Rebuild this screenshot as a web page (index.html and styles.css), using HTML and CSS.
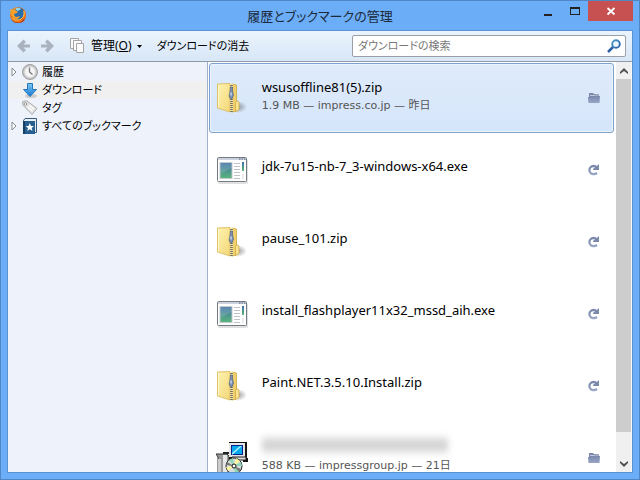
FILE: index.html
```html
<!DOCTYPE html>
<html lang="ja">
<head>
<meta charset="utf-8">
<title>履歴とブックマークの管理</title>
<link rel="stylesheet" href="styles.css">
</head>
<body>
<svg class="defs" aria-hidden="true">
  <defs>
    <linearGradient id="g-folder" x1="0" y1="0" x2="1" y2="1"><stop offset="0" stop-color="#fff3b0"/><stop offset="1" stop-color="#f3d778"/></linearGradient>
    <linearGradient id="g-app" x1="0" y1="0" x2="0" y2="1"><stop offset="0" stop-color="#3d6fa8"/><stop offset="1" stop-color="#5cb67a"/></linearGradient>
    <linearGradient id="g-action" x1="0" y1="0" x2="0" y2="1"><stop offset="0" stop-color="#7a88ad"/><stop offset="1" stop-color="#98a5c5"/></linearGradient>
    <linearGradient id="g-down" x1="0" y1="0" x2="0" y2="1"><stop offset="0" stop-color="#7cc8f2"/><stop offset="1" stop-color="#1a78d4"/></linearGradient>
    <linearGradient id="g-lens" x1="0" y1="0" x2="1" y2="1"><stop offset="0" stop-color="#4f9fd0"/><stop offset="1" stop-color="#2558a0"/></linearGradient>
    <radialGradient id="g-shadow"><stop offset="0" stop-color="#555" stop-opacity=".55"/><stop offset="1" stop-color="#555" stop-opacity="0"/></radialGradient>
    <linearGradient id="g-fox" x1="0" y1="0" x2="1" y2="1"><stop offset="0" stop-color="#f49a20"/><stop offset="1" stop-color="#c8380c"/></linearGradient>
  </defs>
  <symbol id="zip" viewBox="0 0 32 32">
    <ellipse cx="22" cy="25" rx="9" ry="6" fill="url(#g-shadow)"/>
    <path d="M16 2l4.500 1v26l-4.500 1z" fill="#f0d06c" stroke="#d0a93f" stroke-width=".8"/>
    <path d="M19.500 20.500q0-1.500 1.500-1.500 2 0 2 2v6.500l-3.500 2z" fill="#fbe594" stroke="#d0a93f" stroke-width=".8"/>
    <path d="M1.500 2l12.500-.5L14 30 1.500 26z" fill="url(#g-folder)" stroke="#dcbb5c" stroke-width=".9"/>
    <path d="M2.600 3v22" stroke="#fff9d2"/>
    <path d="M14 1.500l3 .5v28l-3 .5z" fill="#f6e3a0"/>
    <path d="M15.500 3v27" stroke="#6f6c5e" stroke-width="2.600" stroke-dasharray="1 1"/>
    <path d="M14.500 5h2v4l1 4-1.500 4h-1.500l-1.500-3 1-4z" fill="#7d92b4" stroke="#53637f" stroke-width=".7"/>
    <path d="M15 10.500v3" stroke="#f3f7fc"/>
  </symbol>
  <symbol id="app" viewBox="0 0 32 32">
    <rect x="2" y="5" width="30" height="25" rx="2" fill="#999" opacity=".3"/>
    <rect x="1.500" y="3.500" width="29" height="24" rx="1" fill="#fff" stroke="#747b84"/>
    <path d="M2 4h28v2H2z" fill="#ccd2dc"/>
    <path d="M23 5h1.500m1 0H27m1 0h1.500" stroke="#536174"/>
    <rect x="4" y="8.500" width="12" height="16" fill="url(#g-app)" stroke="#c3c9cd"/>
    <path d="M4.500 9h11v5l-11 6z" fill="#fff" opacity=".15"/>
    <path d="M18 9.500h6m-6 3h6m-6 3h6m-6 3h6m-6 3h6m-6 3h6" stroke="#c0c2c6"/>
    <path d="M26 8h2v9h-2z" fill="url(#g-app)"/>
    <path d="M26 20h2v5h-2z" fill="#ececec"/>
  </symbol>
  <symbol id="installer" viewBox="0 0 32 32">
    <path d="M0 12l2 3v17h11V14l-2-2z" fill="#999" stroke="#333"/>
    <path d="M7 13h4v19H7z" fill="#e7e7e7"/>
    <path d="M2 17h3v15H2z" fill="#ccc"/>
    <path d="M7 10h6v2H7z" fill="#222"/>
    <path d="M13 0h18v16h1v4h-5v-3H13z" fill="#151515"/>
    <path d="M13 1h16v14H13z" fill="#e5e5e5"/>
    <path d="M15 3h12v10H15z" fill="#08218d"/>
    <path d="M16 4h10v8H16z" fill="#08a8ec"/>
    <path d="M16 11l8-7h2l-10 9z" fill="#a6f5ff"/>
    <path d="M16 15h14v3H16z" fill="#ddd" stroke="#222"/>
    <circle cx="18" cy="24" r="8" fill="#d8dcdb" stroke="#222"/>
    <path d="M18 24l-5-6 4-2zm0 0l7-4 1 4zm0 0l5 6-4 2z" fill="#8ed6b5"/>
    <path d="M18 24l2-8 4 3zm0 0l-8 1 2 4z" fill="#faf59c"/>
    <path d="M18 24l-7-4-1 3zm0 0l7 3-2 3z" fill="#777"/>
    <circle cx="18" cy="24" r="2" fill="#fff" stroke="#111"/>
  </symbol>
  <symbol id="folder" viewBox="0 0 12 12">
    <path d="M1 1h4l1 1h5v3H1z" fill="#7b88aa"/>
    <path d="M2 3.500h4.500L7.500 3H11" fill="none" stroke="#dfe6f3" stroke-width=".7"/>
    <path d="M0 5h6l1-1h5l-.5 7H.5z" fill="url(#g-action)"/>
  </symbol>
  <symbol id="retry" viewBox="0 0 12 12">
    <path d="M9 3.300Q7.500 2 5.500 2a4 4 0 0 0 0 8.200Q7.500 10.200 9 9" fill="none" stroke="url(#g-action)" stroke-width="2.300"/>
    <path d="M11 0v6H5V5l4-3z" fill="#7b88aa"/>
  </symbol>
  <symbol id="twisty" viewBox="0 0 6 10"><path d="M1 1l4 4-4 4z" fill="#fff" stroke="#85898f"/></symbol>
</svg>

<div class="window">
  <header class="titlebar">
    <svg class="fox" viewBox="0 0 18 18" aria-hidden="true">
      <circle cx="9" cy="9" r="8" fill="url(#g-fox)"/>
      <circle cx="9.500" cy="7.500" r="6" fill="#286eac"/>
      <path d="M7 2q3-1 5 1L9 5 7 4z" fill="#91d5f2"/>
      <path d="M1 3l3 1q2-2 4-2L6 4l3 2-1 1-3 1q0 3 3 3l3-1q-1 3-4 3-4-1-5-5z" fill="#f7a12b"/>
      <path d="M14 3q3 3 3 6 0 7-7 8-6 0-8-5 3 3 7 3 6-1 6-7 0-3-1-5z" fill="#ef761b"/>
      <path d="M15 5q1 7-5 9-4 1-7-2" fill="none" stroke="#ffce54"/>
      <path d="M2 13q4 5 10 3l4-4q-1 5-7 5-5 0-7-4z" fill="#952b13"/>
    </svg>
    <h1>履歴とブックマークの管理</h1>
    <div class="window-buttons">
      <button type="button" aria-label="最小化"><svg viewBox="0 0 12 12"><path d="M2 9h8v2H2z" fill="#222"/></svg></button>
      <button type="button" aria-label="最大化"><svg viewBox="0 0 12 12"><path d="M1 2h10v8H1zM2 4v5h8V4z" fill="#222" fill-rule="evenodd"/></svg></button>
      <button type="button" class="close" aria-label="閉じる"><svg viewBox="0 0 12 12"><path d="M2.500 3l7 6.500m0-6.500l-7 6.500" stroke="#fff" stroke-width="1.800"/></svg></button>
    </div>
  </header>
  <div class="content">
    <nav class="toolbar">
      <button type="button" aria-label="戻る"><svg class="arrow" viewBox="0 0 14 14"><path d="M0 7l6.500-6.500L9 3 6.500 5.500H13v3H6.500L9 11l-2.500 2.500z" fill="#a9b2be"/></svg></button>
      <button type="button" aria-label="進む"><svg class="arrow" viewBox="0 0 14 14"><path d="M13 7L6.500.5 4 3l2.500 2.500H0v3h6.500L4 11l2.500 2.500z" fill="#a9b2be"/></svg></button>
      <button type="button" class="manage">
        <svg class="pages" viewBox="0 0 16 16"><g fill="#fbfbfb" stroke="#a4a4a4"><path d="M.5.500h8v10h-8z"/><path d="M3.500 2.500h8v10h-8z"/><path d="M6.500 5.500h7v9h-7z"/></g></svg>
        <span>管理(<u>O</u>)</span>
        <svg class="caret" viewBox="0 0 5 3"><path d="M0 0h5L2.500 3z"/></svg>
      </button>
      <button type="button" class="clear">ダウンロードの消去</button>
      <label class="search">
        <input type="text" placeholder="ダウンロードの検索" aria-label="ダウンロードの検索">
        <svg viewBox="0 0 14 14"><path d="M1 13l5-5" stroke="#2d5fa4" stroke-width="2.500"/><circle cx="9" cy="5" r="3.800" fill="#edf6ff" stroke="url(#g-lens)" stroke-width="1.900"/></svg>
      </label>
    </nav>
    <div class="panes">
      <ul class="tree">
        <li>
          <svg class="twisty"><use href="#twisty"/></svg>
          <svg class="icon" viewBox="0 0 16 16"><circle cx="8" cy="8" r="7.500" fill="#c4c4c4" stroke="#a0a0a0"/><circle cx="8" cy="8" r="5.500" fill="#f5f5f5" stroke="#d9d9d9"/><path d="M7.500 3.500V8l3 2.500" fill="none" stroke="#777" stroke-width="1.300"/></svg>
          <a href="#history">履歴</a>
        </li>
        <li class="current">
          <span class="twisty"></span>
          <svg class="icon" viewBox="0 0 16 16"><ellipse cx="9" cy="14" rx="6" ry="2" fill="#aaa" opacity=".5"/><path d="M5.500 1.500h5v6h4L8 14.500 1.500 7.500h4z" fill="url(#g-down)" stroke="#2278b9"/></svg>
          <a href="#downloads">ダウンロード</a>
        </li>
        <li>
          <span class="twisty"></span>
          <svg class="icon" viewBox="0 0 16 16"><path d="M.8 5V1.500l4-.7L15 8.500 10 14.500z" fill="#e2e2e2" stroke="#aaa"/><circle cx="3.500" cy="4" r="1.300" fill="#fff" stroke="#929292"/><path d="M7 5l5 4M5.500 7l5 4" stroke="#fff" stroke-width="1.500"/></svg>
          <a href="#tags">タグ</a>
        </li>
        <li>
          <svg class="twisty"><use href="#twisty"/></svg>
          <svg class="icon" viewBox="0 0 16 16"><path d="M1.500 2.500L3 .5h11.500v14H3l-1.500 1z" fill="#e7eef5" stroke="#345b7b"/><path d="M1 3h12v13H1z" fill="#265f8f"/><path d="M1 3h2v13H1z" fill="#163f64"/><path d="M7.800 5l1.200 3 3 .1-2.300 1.900.8 3-2.700-1.700L5.300 13l.7-3-2.400-1.900L6.600 8z" fill="#fff"/></svg>
          <a href="#bookmarks">すべてのブックマーク</a>
        </li>
      </ul>
      <main class="downloads">
        <article class="row selected">
          <svg class="file"><use href="#zip"/></svg>
          <div class="text"><div class="name">wsusoffline81(5).zip</div><div class="details">1.9 MB — impress.co.jp — 昨日</div></div>
          <button type="button" aria-label="フォルダーを開く"><svg class="action"><use href="#folder"/></svg></button>
        </article>
        <article class="row">
          <svg class="file"><use href="#app"/></svg>
          <div class="text"><div class="name">jdk-7u15-nb-7_3-windows-x64.exe</div></div>
          <button type="button" aria-label="再試行"><svg class="action"><use href="#retry"/></svg></button>
        </article>
        <article class="row">
          <svg class="file"><use href="#zip"/></svg>
          <div class="text"><div class="name">pause_101.zip</div></div>
          <button type="button" aria-label="再試行"><svg class="action"><use href="#retry"/></svg></button>
        </article>
        <article class="row">
          <svg class="file"><use href="#app"/></svg>
          <div class="text"><div class="name">install_flashplayer11x32_mssd_aih.exe</div></div>
          <button type="button" aria-label="再試行"><svg class="action"><use href="#retry"/></svg></button>
        </article>
        <article class="row">
          <svg class="file"><use href="#zip"/></svg>
          <div class="text"><div class="name">Paint.NET.3.5.10.Install.zip</div></div>
          <button type="button" aria-label="再試行"><svg class="action"><use href="#retry"/></svg></button>
        </article>
        <article class="row">
          <svg class="file"><use href="#installer"/></svg>
          <div class="text"><div class="name"><div class="redacted"></div></div><div class="details">588 KB — impressgroup.jp — 21日</div></div>
          <button type="button" aria-label="フォルダーを開く"><svg class="action"><use href="#folder"/></svg></button>
        </article>
      </main>
      <div class="scrollbar">
        <button type="button" aria-label="上へ"><svg viewBox="0 0 8 6"><path d="M0 4l4-4 4 4v2L4 3 0 6z" fill="#505050"/></svg></button>
        <div class="track"><div class="thumb"></div></div>
        <button type="button" aria-label="下へ"><svg viewBox="0 0 8 6"><path d="M0 2l4 4 4-4V0L4 3 0 0z" fill="#505050"/></svg></button>
      </div>
    </div>
  </div>
</div>
</body>
</html>
```
FILE: styles.css
```css
* { box-sizing: border-box; }

body {
  margin: 0;
  font: 11px/18px "Noto Sans", "Noto Sans CJK JP", sans-serif;
  font-feature-settings: "palt";
  color: #000;
}

svg { display: block; flex: none; }
.defs { position: absolute; width: 0; height: 0; }

button {
  display: flex;
  align-items: center;
  justify-content: center;
  padding: 0;
  border: 0;
  background: none;
  color: inherit;
  font: inherit;
  font-feature-settings: inherit;
  white-space: nowrap;
}

.window {
  display: flex;
  flex-direction: column;
  height: 100vh;
  padding: 0 6px 6px;
  border: 1px solid #4f87c4;
  background: #6badf6;
}

/* Title bar */
.titlebar {
  display: grid;
  grid-template-columns: 1fr auto 1fr;
  align-items: start;
  height: 29px;
  flex: none;
}
.fox { width: 18px; height: 18px; margin: 5px 2px; }
.titlebar h1 {
  margin: 4px 0 0;
  font-size: 13px;
  font-weight: 400;
  line-height: 22px;
  color: #1c2a3c;
}
.window-buttons { display: flex; justify-content: flex-end; }
.window-buttons button { width: 27px; height: 20px; }
.window-buttons svg { width: 12px; height: 12px; }
.window-buttons .close { width: 45px; background: #c75050; }

.content {
  display: flex;
  flex-direction: column;
  flex: 1;
  min-height: 0;
  border: 1px solid #5a92d2;
}

/* Toolbar */
.toolbar {
  display: flex;
  align-items: center;
  flex: none;
  gap: 10px;
  height: 31px;
  padding: 0 6px 0 9px;
  border-bottom: 1px solid #8e9aaa;
  background: linear-gradient(#eaf4fd, #d8e6f6);
}
.arrow { width: 14px; height: 14px; }
.manage { gap: 5px; margin: 0 5px 0 5px; font-size: 12px; }
.pages { width: 16px; height: 16px; }
.caret { width: 5px; height: 3px; }
.search {
  display: flex;
  align-items: center;
  width: 45%;
  height: 22px;
  margin-left: auto;
  padding: 0 4px 0 5px;
  border: 1px solid #9aa0a8;
  border-radius: 2px;
  background: #fff;
}
.search input {
  flex: 1;
  min-width: 0;
  padding: 0;
  border: 0;
  outline: 0;
  background: none;
  font: inherit;
  font-feature-settings: inherit;
}
.search input::placeholder { color: #777; opacity: 1; }
.search svg { width: 14px; height: 14px; }

/* Panes */
.panes { display: flex; flex: 1; min-height: 0; }
.tree {
  width: 32%;
  max-width: 200px;
  margin: 0;
  padding: 1px 0;
  border-right: 1px solid #a0b0cc;
  background: #edf2fb;
  list-style: none;
}
.tree li { display: flex; align-items: center; height: 18px; padding-left: 3px; }
.tree .current { background: #f0f0f0; }
.tree a { color: inherit; text-decoration: none; white-space: nowrap; }
.twisty { width: 6px; height: 10px; margin-right: 5px; }
.tree .icon { width: 16px; height: 16px; margin-right: 4px; }

.downloads { flex: 1; min-width: 0; overflow: hidden; padding: 1px 2px 0 1px; background: #fff; }
.row {
  display: flex;
  align-items: center;
  height: 70px;
  margin-bottom: 2px;
  padding: 0 13px 0 6px;
  border: 1px solid transparent;
  border-radius: 3px;
}
.row.selected {
  border-color: #7da2ce;
  background: linear-gradient(#dfebfb, #d5e5fa);
  box-shadow: inset 0 0 0 1px #ebf4fd;
}
.file { width: 32px; height: 32px; }
.text { flex: 1; min-width: 0; padding: 0 8px 8px 14px; }
.name { height: 24px; font-size: 13px; line-height: 24px; white-space: nowrap; }
.details {
  font-family: "DejaVu Sans", "Noto Sans CJK JP", sans-serif;
  line-height: 14px;
  color: #555;
  white-space: nowrap;
}
.action { width: 12px; height: 12px; }
.redacted {
  width: 186px;
  height: 20px;
  background: linear-gradient(#f8f8f8, #d2d2d2 40%, #d2d2d2 60%, #f8f8f8);
  filter: blur(3px);
}

.scrollbar {
  display: flex;
  flex-direction: column;
  flex: none;
  width: 16px;
  border-right: 1px solid #f8f8f8;
  background: #f0f0f0;
}
.scrollbar button { height: 17px; }
.scrollbar svg { width: 8px; height: 6px; }
.track { flex: 1; }
.thumb { height: 94%; background: #cdcdcd; }
```
